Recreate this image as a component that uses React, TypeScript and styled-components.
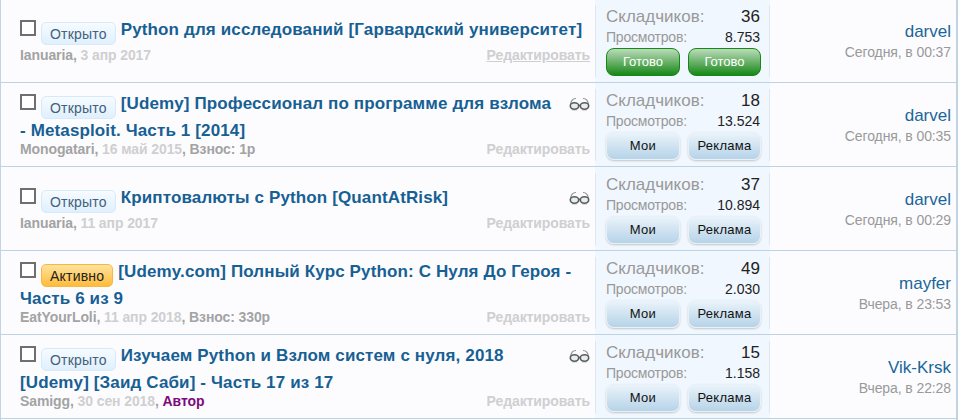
import styled, { createGlobalStyle } from "styled-components";

const GlobalStyle = createGlobalStyle`
    html, body {
        margin: 0;
        padding: 0;
        background: #fff;
        font-family: "Liberation Sans", Arial, sans-serif;
    }
`

const List = styled.div`
    width: 958px;
    height: 421px;
    overflow: hidden;
    box-sizing: border-box;
    background: #fcfcff;
    border-left: 1px solid #c0d4e4;
    border-right: 2px solid #c0d4e4;
    margin-top: -1px;
`

const Row = styled.div`
    display: grid;
    grid-template-columns: 594px 175px 1fr;
    height: 84px;
    box-sizing: border-box;
    border-bottom: 1px solid #bdd2e3;
`

const Main = styled.div`
    display: flex;
    flex-direction: column;
    justify-content: center;
    padding: 2px 5px 0 19px;
`

const Title = styled.div`
    font-size: 17px;
    font-weight: bold;
    line-height: 20px;
    color: #176093;
    letter-spacing: 0.13px;
`

const Checkbox = styled.span`
    display: inline-block;
    width: 12px;
    height: 12px;
    border: 2px solid #6f6f6f;
    background: #fff;
    vertical-align: -1px;
    margin-right: 5px;
`

const Badge = styled.span<{ $active?: boolean }>`
    display: inline-block;
    box-sizing: border-box;
    height: 23px;
    line-height: 22px;
    padding: 0 8px;
    margin: 0 5px 2px 0;
    border-radius: 5px;
    font-size: 14px;
    font-weight: normal;
    letter-spacing: 0.2px;
    vertical-align: -4px;
    border: 1px solid ${(props) => (props.$active ? "#f5b942" : "#d7eafa")};
    color: ${(props) => (props.$active ? "#222" : "#43607c")};
    background: ${(props) =>
        props.$active
            ? "linear-gradient(#ffe39d, #ffbb3c)"
            : "linear-gradient(#f6fbff, #dff0fd)"};
`

const Glasses = styled.svg`
    float: right;
    width: 21px;
    height: 14px;
    margin: 3px 0 0 8px;
`

const Meta = styled.div`
    display: flex;
    justify-content: space-between;
    font-size: 14px;
    font-weight: bold;
    line-height: 16px;
    letter-spacing: -0.1px;
    color: #a3a3a3;
`

const MetaDate = styled.span`
    color: #cfcfcf;
`

const Author = styled.span`
    color: #7c0a7c;
`

const Edit = styled.span<{ $hover?: boolean }>`
    color: #cfcfcf;
    text-decoration: ${(props) => (props.$hover ? "underline" : "none")};
`

const Stats = styled.div`
    box-sizing: border-box;
    display: flex;
    flex-direction: column;
    padding: 7px 9px 0 10px;
    background: #f1f7fe;
    border-left: 1px solid;
    border-right: 1px solid;
    border-image: linear-gradient(transparent 7px, #dce9f3 7px, #dce9f3 calc(100% - 6px), transparent calc(100% - 6px)) 1;
`

const StatLine = styled.div<{ $big?: boolean }>`
    display: flex;
    justify-content: space-between;
    align-items: baseline;
    height: ${(props) => (props.$big ? "22px" : "19px")};
    line-height: ${(props) => (props.$big ? "22px" : "19px")};
    font-size: ${(props) => (props.$big ? "17px" : "14px")};
    color: #999;
`

const StatLabel = styled.span<{ $small?: boolean }>`
    letter-spacing: ${(props) => (props.$small ? "-0.2px" : "0")};
`

const StatValue = styled.span`
    color: #222;
`

const Buttons = styled.div`
    display: grid;
    grid-template-columns: 74px 73px;
    gap: 8px;
    margin-top: 1px;
`

const Button = styled.div<{ $done?: boolean }>`
    height: 28px;
    box-sizing: border-box;
    line-height: 26px;
    text-align: center;
    font-size: 13px;
    letter-spacing: ${(props) => (props.$done ? "0" : "0.3px")};
    border-radius: 8px;
    color: ${(props) => (props.$done ? "#fff" : "#111")};
    border: 1px solid ${(props) => (props.$done ? "#138a13" : "#e8f1f8")};
    background: ${(props) =>
        props.$done
            ? "linear-gradient(#bcdcbb, #178717)"
            : "linear-gradient(#eaf3fa, #b6d3e8)"};
    box-shadow: ${(props) => (props.$done ? "none" : "0 1px 2px #c4c4c4")};
`

const Last = styled.div`
    display: flex;
    flex-direction: column;
    justify-content: center;
    align-items: flex-end;
    padding: 2px 5px 0 0;
`

const LastUser = styled.div`
    font-size: 17px;
    line-height: 21px;
    color: #1a6699;
`

const LastTime = styled.div`
    font-size: 14px;
    line-height: 21px;
    letter-spacing: -0.1px;
    color: #999;
`

const GlassesIcon = () => (
    <Glasses viewBox="0 0 21 14" fill="none">
        <path d="M1.5 8C2 3 4 1.5 7 1.5M19.5 8C19 3 17 1.5 14 1.5" stroke="#8f8f8f" strokeWidth="1.2" />
        <ellipse cx="5.5" cy="9" rx="4.2" ry="3.2" fill="#e6eef5" stroke="#5c5c5c" strokeWidth="1.6" />
        <ellipse cx="15.5" cy="9" rx="4.2" ry="3.2" fill="#e6eef5" stroke="#5c5c5c" strokeWidth="1.6" />
        <path d="M9.5 8.5h2" stroke="#5c5c5c" strokeWidth="1.4" />
        <path d="M3 13.5h5M13 13.5h5" stroke="#dddddd" strokeWidth="1" />
    </Glasses>
)

type Topic = {
    status: string
    active?: boolean
    title: string
    glasses?: boolean
    author: string
    date: string
    extra?: string
    isAuthor?: boolean
    hover?: boolean
    count: string
    views: string
    done?: boolean
    user: string
    time: string
}

const topics: Topic[] = [
    { status: "Открыто", title: "Python для исследований [Гарвардский университет]", author: "Ianuaria", date: "3 апр 2017", hover: true, count: "36", views: "8.753", done: true, user: "darvel", time: "Сегодня, в 00:37" },
    { status: "Открыто", title: "[Udemy] Профессионал по программе для взлома - Metasploit. Часть 1 [2014]", glasses: true, author: "Monogatari", date: "16 май 2015", extra: "Взнос: 1р", count: "18", views: "13.524", user: "darvel", time: "Сегодня, в 00:35" },
    { status: "Открыто", title: "Криптовалюты с Python [QuantAtRisk]", glasses: true, author: "Ianuaria", date: "11 апр 2017", count: "37", views: "10.894", user: "darvel", time: "Сегодня, в 00:29" },
    { status: "Активно", active: true, title: "[Udemy.com] Полный Курс Python: С Нуля До Героя - Часть 6 из 9", author: "EatYourLoli", date: "11 апр 2018", extra: "Взнос: 330р", count: "49", views: "2.030", user: "mayfer", time: "Вчера, в 23:53" },
    { status: "Открыто", title: "Изучаем Python и Взлом систем с нуля, 2018 [Udemy] [Заид Саби] - Часть 17 из 17", glasses: true, author: "Samigg", date: "30 сен 2018", extra: "Автор", isAuthor: true, count: "15", views: "1.158", user: "Vik-Krsk", time: "Вчера, в 22:28" },
]

const App = () => {
    return (
        <>
            <GlobalStyle />
            <List>
                {topics.map((topic) => (
                    <Row key={topic.title}>
                        <Main>
                            <Title>
                                {topic.glasses && <GlassesIcon />}
                                <Checkbox />
                                <Badge $active={topic.active}>{topic.status}</Badge>
                                {topic.title}
                            </Title>
                            <Meta>
                                <span>
                                    {topic.author}, <MetaDate>{topic.date}</MetaDate>
                                    {topic.extra && ", "}
                                    {topic.isAuthor ? <Author>{topic.extra}</Author> : topic.extra}
                                </span>
                                <Edit $hover={topic.hover}>Редактировать</Edit>
                            </Meta>
                        </Main>
                        <Stats>
                            <StatLine $big>
                                <StatLabel>Складчиков:</StatLabel>
                                <StatValue>{topic.count}</StatValue>
                            </StatLine>
                            <StatLine>
                                <StatLabel $small>Просмотров:</StatLabel>
                                <StatValue>{topic.views}</StatValue>
                            </StatLine>
                            <Buttons>
                                <Button $done={topic.done}>{topic.done ? "Готово" : "Мои"}</Button>
                                <Button $done={topic.done}>{topic.done ? "Готово" : "Реклама"}</Button>
                            </Buttons>
                        </Stats>
                        <Last>
                            <LastUser>{topic.user}</LastUser>
                            <LastTime>{topic.time}</LastTime>
                        </Last>
                    </Row>
                ))}
            </List>
        </>
    )
}

export default App;
